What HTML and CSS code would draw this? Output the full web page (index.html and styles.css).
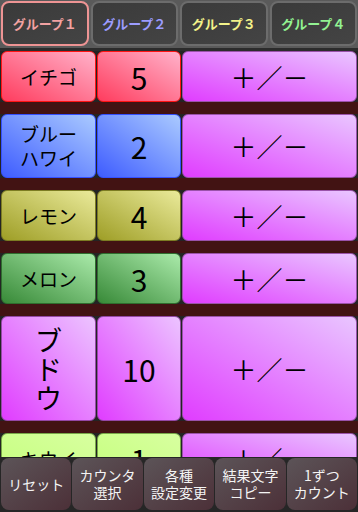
FILE: index.html
```html
<!DOCTYPE html>
<html lang="ja">
<head>
<meta charset="utf-8">
<title>カウンター</title>
<link rel="stylesheet" href="styles.css">
</head>
<body>
<div class="app">
  <header class="tabs">
    <div class="tab tab-1 active">グループ１</div>
    <div class="tab tab-2">グループ２</div>
    <div class="tab tab-3">グループ３</div>
    <div class="tab tab-4">グループ４</div>
  </header>
  <main class="list">
    <div class="row">
      <div class="cell name c-red">イチゴ</div>
      <div class="cell count c-red">5</div>
      <div class="cell pm">＋／－</div>
    </div>
    <div class="row">
      <div class="cell name c-blue">ブルー<br>ハワイ</div>
      <div class="cell count c-blue">2</div>
      <div class="cell pm">＋／－</div>
    </div>
    <div class="row">
      <div class="cell name c-lemon">レモン</div>
      <div class="cell count c-lemon">4</div>
      <div class="cell pm">＋／－</div>
    </div>
    <div class="row">
      <div class="cell name c-melon">メロン</div>
      <div class="cell count c-melon">3</div>
      <div class="cell pm">＋／－</div>
    </div>
    <div class="row">
      <div class="cell name name-big c-grape">ブ<br>ド<br>ウ</div>
      <div class="cell count c-grape">10</div>
      <div class="cell pm">＋／－</div>
    </div>
    <div class="row">
      <div class="cell name c-lime">キウイ</div>
      <div class="cell count c-lime">1</div>
      <div class="cell pm">＋／－</div>
    </div>
  </main>
  <nav class="bar">
    <div class="btn">リセット</div>
    <div class="btn">カウンタ<br>選択</div>
    <div class="btn">各種<br>設定変更</div>
    <div class="btn">結果文字<br>コピー</div>
    <div class="btn">1ずつ<br>カウント</div>
  </nav>
</div>
</body>
</html>
```
FILE: styles.css
```css
html, body {
  margin: 0;
  padding: 0;
  width: 358px;
  height: 512px;
  overflow: hidden;
  background: #2c2c2c;
  font-family: "Noto Sans CJK JP", "Noto Sans", Roboto, sans-serif;
}

.app {
  width: 358px;
  height: 512px;
  position: relative;
}

.tabs {
  height: 48px;
  box-sizing: border-box;
  background: #5a5a5a;
  display: grid;
  grid-template-columns: repeat(4, 1fr);
  column-gap: 2px;
  padding: 1px 1px 2px 1px;
}

.tab {
  border: 2px solid #6c6c6c;
  border-radius: 8px;
  background: linear-gradient(to bottom right, #3a3a3a, #444444);
  display: flex;
  align-items: center;
  justify-content: center;
  font-size: 13px;
  font-weight: bold;
}

.tab.active { border-color: #ee9494; }
.tab-1 { color: #f2a2a2; }
.tab-2 { color: #9c9cff; }
.tab-3 { color: #f2f28a; }
.tab-4 { color: #92f292; }

.list {
  padding-top: 3px;
  background: #2c2c2c;
}

.row {
  display: grid;
  grid-template-columns: 95px 84px 175px;
  column-gap: 1px;
  padding: 0 1px;
  border-bottom: 12px solid #421313;
  background: #242424;
}

.cell {
  box-sizing: border-box;
  min-height: 51px;
  border-radius: 6px;
  border: 1px solid;
  display: flex;
  align-items: center;
  justify-content: center;
  text-align: center;
  color: #000;
  padding: 7px 0;
}

.name {
  font-size: 19px;
  line-height: 24px;
}

.name-big {
  font-size: 27px;
  line-height: 29px;
  padding: 8px 0;
}

.count {
  font-size: 30px;
  line-height: 34px;
}

.pm {
  font-size: 26px;
  line-height: 32px;
  border-color: #9a52aa;
  background: linear-gradient(to top right, #e03cff, #e9c6ff);
}

.c-red {
  border-color: #ff1414;
  background: linear-gradient(to top right, #ff3c5e, #ffb2ca);
}
.c-blue {
  border-color: #3450ff;
  background: linear-gradient(to top right, #3e5cff, #aacaff);
}
.c-lemon {
  border-color: #7c7c22;
  background: linear-gradient(to top right, #9e9e26, #eaea9a);
}
.c-melon {
  border-color: #2e6e2e;
  background: linear-gradient(to top right, #388a38, #aaeaaa);
}
.c-grape {
  border-color: #9448a6;
  background: linear-gradient(to top right, #e03cff, #ecc4ff);
}
.c-lime {
  border-color: #78a848;
  background: linear-gradient(to top right, #c4ff7c, #d8ffa0);
}

.bar {
  position: fixed;
  left: 0;
  right: 0;
  bottom: 0;
  height: 55px;
  box-sizing: border-box;
  padding: 1px 1px 2px 1px;
  background: #262626;
  display: grid;
  grid-template-columns: repeat(5, 1fr);
  column-gap: 1px;
}

.btn {
  border-radius: 8px;
  background: linear-gradient(to bottom right, #5c5458, #4c3038);
  color: #f4f4f4;
  font-size: 14px;
  line-height: 17px;
  display: flex;
  align-items: center;
  justify-content: center;
  text-align: center;
}
```
